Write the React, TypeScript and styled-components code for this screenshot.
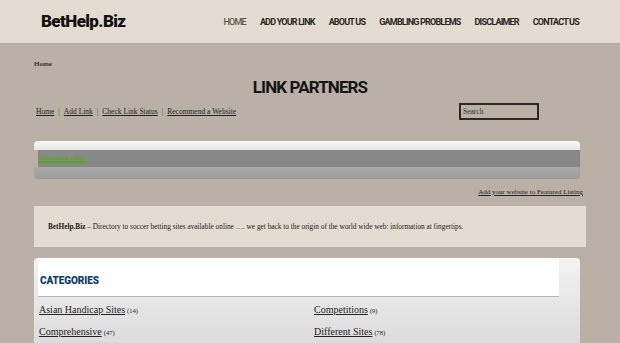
import React from "react";
import styled, { createGlobalStyle } from "styled-components";

const GlobalStyle = createGlobalStyle`
  body {
    margin: 0;
    background: #bbb0a5;
    font-family: "Liberation Serif", "Times New Roman", serif;
    color: #222;
  }
  a { color: inherit; }
`;

const Header = styled.header`
  background: #e5dcd1;
  height: 43px;
  border-bottom: 1px solid #b3aaa0;
  display: flex;
  align-items: center;
  justify-content: space-between;
  padding: 0 41px;
`;

const Logo = styled.div`
  font-family: "Roboto", "Liberation Sans", sans-serif;
  font-weight: 900;
  font-size: 17px;
  letter-spacing: -0.6px;
  color: #111;
  margin-top: -1px;
`;

const Nav = styled.nav`
  display: flex;
  gap: 14px;
`;

const NavItem = styled.a<{ $active?: boolean }>`
  font-family: "Roboto", "Liberation Sans", sans-serif;
  font-size: 9px;
  letter-spacing: -0.8px;
  text-decoration: none;
  text-transform: uppercase;
  color: ${(p) => (p.$active ? "#5c5650" : "#2a2624")};
  font-weight: ${(p) => (p.$active ? 500 : 700)};
`;

const Main = styled.main`
  padding: 0 34px;
`;

const Crumb = styled.div`
  font-size: 7px;
  font-weight: bold;
  color: #333;
  padding-top: 16px;
  height: 12px;
`;

const Title = styled.h1`
  margin: 5px 0 0;
  text-align: center;
  font-family: "Roboto", "Liberation Sans", sans-serif;
  font-weight: 700;
  font-size: 17px;
  letter-spacing: -0.9px;
  color: #151515;
  height: 20px;
`;

const ToolRow = styled.div`
  display: flex;
  justify-content: space-between;
  align-items: center;
  margin-top: 6px;
  padding-left: 2px;
  padding-right: 47px;
`;

const SubLinks = styled.div`
  display: flex;
  align-items: center;
  font-size: 7.5px;
  color: #222;
`;

const Sep = styled.span`
  color: #555;
  margin: 0 4px;
`;

const Search = styled.input`
  width: 80px;
  height: 17px;
  box-sizing: border-box;
  border: 2px solid #2d2826;
  background: transparent;
  font-family: "Liberation Serif", serif;
  font-size: 7.5px;
  padding: 0 2px;
  &::placeholder { color: #333; }
`;

const Featured = styled.div`
  margin-top: 21px;
  width: 546px;
  height: 37px;
  border-radius: 4px;
  display: flex;
  flex-direction: column;
  overflow: hidden;
  box-shadow: 0 1px 1px rgba(0,0,0,0.15);
`;

const FeaturedTop = styled.div`
  height: 9px;
  background: linear-gradient(#f8f8f8, #e6e6e6);
`;

const FeaturedBand = styled.div`
  height: 17px;
  background: #888888;
  margin-left: 4px;
  display: flex;
  align-items: center;
  padding-left: 1px;
`;

const FeaturedBase = styled.div`
  flex: 1;
  background: linear-gradient(#a8a8a8, #9e9e9e);
`;

const FeaturedLink = styled.a`
  font-family: "DejaVu Sans", sans-serif;
  font-size: 4.5px;
  font-weight: bold;
  letter-spacing: 0.35px;
  color: #55a812;
  text-decoration: underline;
  text-decoration-thickness: 1.5px;
`;

const AddFeatured = styled.div`
  text-align: right;
  font-size: 7px;
  margin-top: 10px;
  margin-right: 3px;
  height: 14px;
`;

const Desc = styled.div`
  margin-top: 4px;
  background: #e5dcd1;
  height: 41px;
  box-sizing: border-box;
  padding: 16px 14px 0;
  font-size: 7.3px;
  color: #1a1a1a;
`;

const Card = styled.section`
  margin-top: 11px;
  width: 546px;
  border-radius: 4px 4px 0 0;
  background: linear-gradient(#f3f3f3, #dadada);
  overflow: hidden;
  height: 90px;
`;

const CardHead = styled.div`
  background: #fff;
  margin-right: 21px;
  height: 39px;
  border-bottom: 1px solid #b8b8b8;
  margin-left: 4px;
  display: flex;
  align-items: center;
  padding-top: 6px;
  box-sizing: border-box;
`;

const CardTitle = styled.h2`
  margin: 0 0 0 2px;
  font-family: "Roboto", "Liberation Sans", sans-serif;
  font-weight: 900;
  font-size: 10px;
  letter-spacing: -0.1px;
  color: #0c3d6b;
`;

const Grid = styled.div`
  display: grid;
  grid-template-columns: 275px 1fr;
  padding: 6px 5px 0;
  row-gap: 7px;
`;

const Cat = styled.div`
  font-size: 10px;
  color: #222;
  line-height: 14px;
  a { text-decoration: underline; }
`;

const Count = styled.span`
  font-size: 6.5px;
  margin-left: 2px;
`;

const navItems = ["Home", "Add your link", "About us", "Gambling problems", "Disclaimer", "Contact us"];
const cats: [string, number][] = [
  ["Asian Handicap Sites", 14],
  ["Competitions", 9],
  ["Comprehensive", 47],
  ["Different Sites", 78],
];

export default function App() {
  return (
    <>
      <GlobalStyle />
      <Header>
        <Logo>BetHelp.Biz</Logo>
        <Nav>
          {navItems.map((n, i) => (
            <NavItem key={n} href="#" $active={i === 0}>{n}</NavItem>
          ))}
        </Nav>
      </Header>
      <Main>
        <Crumb>Home</Crumb>
        <Title>LINK PARTNERS</Title>
        <ToolRow>
          <SubLinks>
            <a href="#">Home</a><Sep>|</Sep>
            <a href="#">Add Link</a><Sep>|</Sep>
            <a href="#">Check Link Status</a><Sep>|</Sep>
            <a href="#">Recommend a Website</a>
          </SubLinks>
          <Search placeholder="Search" />
        </ToolRow>
        <Featured>
          <FeaturedTop />
          <FeaturedBand>
            <FeaturedLink href="#">FEATURED LINKS</FeaturedLink>
          </FeaturedBand>
          <FeaturedBase />
        </Featured>
        <AddFeatured><a href="#">Add your website to Featured Listing</a></AddFeatured>
        <Desc>
          <b>BetHelp.Biz</b> – Directory to soccer betting sites available online …. we get back to the origin of the world wide web: information at fingertips.
        </Desc>
        <Card>
          <CardHead>
            <CardTitle>CATEGORIES</CardTitle>
          </CardHead>
          <Grid>
            {cats.map(([name, n]) => (
              <Cat key={name}>
                <a href="#">{name}</a>
                <Count>({n})</Count>
              </Cat>
            ))}
          </Grid>
        </Card>
      </Main>
    </>
  );
}
